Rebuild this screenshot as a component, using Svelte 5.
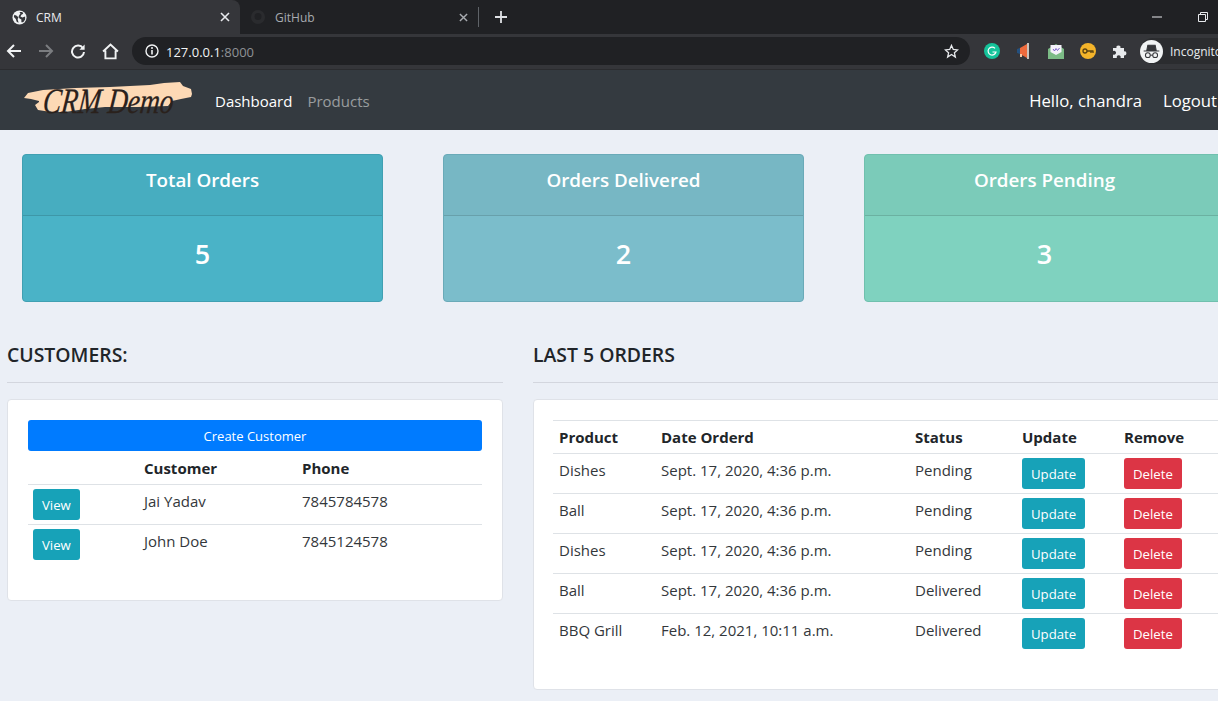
<script>
  const stats = [
    { title: 'Total Orders', value: 5, cls: 'c1' },
    { title: 'Orders Delivered', value: 2, cls: 'c2' },
    { title: 'Orders Pending', value: 3, cls: 'c3' }
  ];
  const customers = [
    { name: 'Jai Yadav', phone: '7845784578' },
    { name: 'John Doe', phone: '7845124578' }
  ];
  const d = 'Sept. 17, 2020, 4:36 p.m.';
  const orders = [
    { p: 'Dishes', d, s: 'Pending' },
    { p: 'Ball', d, s: 'Pending' },
    { p: 'Dishes', d, s: 'Pending' },
    { p: 'Ball', d, s: 'Delivered' },
    { p: 'BBQ Grill', d: 'Feb. 12, 2021, 10:11 a.m.', s: 'Delivered' }
  ];
</script>

<div class="window">
  <div class="tabstrip">
    <div class="tab active">
      <svg class="fav" viewBox="0 0 16 16" width="15" height="15"><circle cx="8" cy="8" r="7.500" fill="#f1f3f4"/><path d="M2.500 5l2.500 1 2 2-1 1.500 1 4-2-1-1-3-2-2zM8 2l3 0 1 2-2 1-1 2 2 1 3-1 0 3-2 3-2 0 0-3-2-1-1-2 1-2 1-1z" fill="#35363a"/></svg>
      <span class="tabtext">CRM</span>
      <svg class="x" viewBox="0 0 10 10" width="10" height="10"><path d="M1 1l8 8M9 1l-8 8" stroke="#e8eaed" stroke-width="1.600"/></svg>
    </div>
    <div class="tab inactive">
      <svg class="fav" viewBox="0 0 16 16" width="16" height="16"><circle cx="8" cy="8" r="7" fill="#2a2b2e"/><circle cx="8" cy="7.500" r="3.500" fill="#202124"/></svg>
      <span class="tabtext dim">GitHub</span>
      <svg class="x" viewBox="0 0 10 10" width="9" height="9"><path d="M1 1l8 8M9 1l-8 8" stroke="#a8abb0" stroke-width="1.600"/></svg>
    </div>
    <span class="tabsep"></span>
    <svg class="plus" viewBox="0 0 14 14" width="14" height="14"><path d="M7 1v12M1 7h12" stroke="#dfe1e5" stroke-width="1.800"/></svg>
    <div class="winctl">
      <svg viewBox="0 0 10 2" width="10" height="2"><path d="M0 1h10" stroke="#e8eaed"/></svg>
      <svg viewBox="0 0 10 10" width="10" height="10"><path d="M.5 2.500h7v7h-7zM2.500 2.500v-2h7v7h-2" fill="none" stroke="#e8eaed"/></svg>
    </div>
  </div>

  <div class="toolbar">
    <div class="navbtn"><svg viewBox="0 0 16 16" width="16" height="16"><path d="M15 8H2M8 2L2 8l6 6" fill="none" stroke="#f1f3f4" stroke-width="2"/></svg></div>
    <div class="navbtn"><svg viewBox="0 0 16 16" width="16" height="16"><path d="M1 8h13M8 2l6 6-6 6" fill="none" stroke="#7b7d80" stroke-width="2"/></svg></div>
    <div class="navbtn"><svg viewBox="0 0 16 16" width="16" height="16"><path d="M13 5.200A6 6 0 1 0 14 9" fill="none" stroke="#f1f3f4" stroke-width="2"/><path d="M14.600 1.500v5.200H9.400z" fill="#f1f3f4"/></svg></div>
    <div class="navbtn"><svg viewBox="0 0 16 16" width="17" height="17"><path d="M1 8l7-6.500L15 8M3.200 7v7.500h9.600V7" fill="none" stroke="#f1f3f4" stroke-width="1.800"/></svg></div>
    <div class="omnibox">
      <svg class="siteinfo" viewBox="0 0 14 14" width="14" height="14"><circle cx="7" cy="7" r="6" fill="none" stroke="#f1f3f4" stroke-width="1.400"/><path d="M7 6v4.500" stroke="#f1f3f4" stroke-width="1.600"/><circle cx="7" cy="3.900" r="1" fill="#f1f3f4"/></svg>
      <span class="url">127.0.0.1<span class="port">:8000</span></span>
      <svg class="star" viewBox="0 0 16 16" width="15" height="15"><path d="M8 1.500l1.900 4.300 4.600.5-3.400 3.100 1 4.600L8 11.200l-4.100 2.800 1-4.600L1.500 6.300l4.600-.5z" fill="none" stroke="#e8eaed" stroke-width="1.400"/></svg>
    </div>
    <div class="exts">
      <svg viewBox="0 0 16 16" width="16" height="16"><circle cx="8" cy="8" r="8" fill="#15c39a"/><path d="M11 5.300A4 4 0 1 0 12 9H8.500" fill="none" stroke="#fff" stroke-width="1.200"/></svg>
      <svg viewBox="0 0 16 16" width="16" height="16"><path d="M1 6l3-1v6l-3-1z" fill="#24507e"/><path d="M4 5l7-4v14l-7-4z" fill="#ee6a3c"/><path d="M12 0v16" stroke="#f1e6dc" stroke-width="1.600"/><path d="M4 11l2 0 0 3H4z" fill="#f3c9a8"/></svg>
      <svg viewBox="0 0 16 16" width="16" height="16"><path d="M0 6l8-5 8 5v10H0z" fill="#7cbb86"/><path d="M2.500 2h11v7l-5.500 3-5.500-3z" fill="#f4f1fa"/><path d="M5 6l1.500 2L8 5.500 9.500 7.500 11.500 5" fill="none" stroke="#7b5fc9" stroke-width="1"/></svg>
      <svg viewBox="0 0 16 16" width="16" height="16"><circle cx="8" cy="8" r="8" fill="#f4b42a"/><circle cx="5" cy="8" r="2" fill="none" stroke="#5b4310" stroke-width="1.300"/><path d="M7 8h6.500M11 8v2M13 8v2" stroke="#5b4310" stroke-width="1.300"/></svg>
      <svg viewBox="0 0 16 16" width="16" height="16"><path d="M1 5h3.500a2 2 0 1 1 3.900 0H12v3.400a2 2 0 1 1 0 3.900V15H8.500a2 2 0 1 0-3.600 0H1v-3.500a2 2 0 1 0 0-3.400z" fill="#e8eaed"/></svg>
    </div>
    <div class="profile">
      <svg viewBox="0 0 22 22" width="23" height="23"><circle cx="11" cy="11" r="11" fill="#f1f3f4"/><path d="M3.500 10.500h15M6.500 10l1-5h7l1 5z" fill="#35363a" stroke="#35363a"/><circle cx="7.500" cy="14.500" r="2.300" fill="none" stroke="#35363a"/><circle cx="14.500" cy="14.500" r="2.300" fill="none" stroke="#35363a"/><path d="M9.800 14.500h2.400" stroke="#35363a"/></svg>
      <span>Incognito</span>
    </div>
  </div>

  <nav class="navbar">
    <svg class="logo" viewBox="0 -8 170 56" width="170" height="56">
      <path d="M1 18l4-5 15-3 32-2 35-1 40-2 14-2 16-1 3 4 8 3 1 5-1 3-10 2-9 2-4 5-30 1-33 0-20 2-20 3-14 0-13-2-3-5 4-3 0-1-8-2z" fill="#fdd9b5"/>
      <text class="logotext" transform="translate(19,33) skewX(-6) scale(1,1.3)">CRM Demo</text>
    </svg>
    <a class="link on" href="#d">Dashboard</a>
    <a class="link off" href="#p">Products</a>
    <div class="navright">
      <span>Hello, chandra</span>
      <span>Logout</span>
    </div>
  </nav>

  <main class="page">
    <section class="stats">
      {#each stats as s}
        <div class="stat {s.cls}">
          <div class="stathead">{s.title}</div>
          <div class="statbody">{s.value}</div>
        </div>
      {/each}
    </section>

    <section class="cols">
      <div class="colleft">
        <h2>CUSTOMERS:</h2>
        <hr />
        <div class="panel custpanel">
          <button class="createbtn">Create Customer</button>
          <table class="cust">
            <thead><tr><th class="cv"></th><th class="cn">Customer</th><th>Phone</th></tr></thead>
            <tbody>
              {#each customers as c}
                <tr><td class="tight"><button class="btn teal">View</button></td><td>{c.name}</td><td>{c.phone}</td></tr>
              {/each}
            </tbody>
          </table>
        </div>
      </div>
      <div class="colright">
        <h2>LAST 5 ORDERS</h2>
        <hr />
        <div class="panel orderpanel">
          <table class="ord">
            <thead><tr><th class="o1">Product</th><th class="o2">Date Orderd</th><th class="o3">Status</th><th class="o4">Update</th><th class="o5">Remove</th></tr></thead>
            <tbody>
              {#each orders as o}
                <tr><td>{o.p}</td><td>{o.d}</td><td>{o.s}</td><td><button class="btn teal">Update</button></td><td><button class="btn red">Delete</button></td></tr>
              {/each}
            </tbody>
          </table>
        </div>
      </div>
    </section>
  </main>
</div>

<style>
  :global(body) { margin: 0; background: #ebeff6; }
  .window { width: 1218px; height: 701px; overflow: hidden; font-family: "Open Sans", "Noto Sans", sans-serif; color: #212529; background: #ebeff6; }

  .tabstrip { height: 34px; background: #202124; display: flex; align-items: center; }
  .tab { width: 240px; height: 34px; display: flex; align-items: center; box-sizing: border-box; flex: none; }
  .tab.active { background: #35363a; border-radius: 0 8px 0 0; padding: 0 10px 0 12px; }
  .tab.inactive { padding: 0 10px 0 10px; width: 238px; }
  .fav { flex: none; }
  .tabtext { margin-left: 9px; font-size: 12px; color: #e8eaed; flex: 1; }
  .tabtext.dim { color: #a8abb0; }
  .tabsep { width: 1px; height: 20px; background: #5f6368; flex: none; }
  .plus { margin-left: 15px; flex: none; }
  .winctl { margin-left: auto; display: flex; gap: 36px; align-items: center; padding-right: 10px; }

  .toolbar { height: 36px; background: #35363a; display: flex; align-items: center; box-sizing: border-box; padding: 0 0 1px 0; border-bottom: 1px solid #2b2c2f; }
  .navbtn { width: 32px; display: flex; justify-content: center; flex: none; margin-left: -2px; margin-right: 2px; }
  .omnibox { width: 838px; height: 28px; margin-left: 4px; background: #202124; border-radius: 14px; display: flex; align-items: center; box-sizing: border-box; padding: 0 11px 0 13px; flex: none; }
  .url { margin-left: 7px; font-size: 13px; color: #f1f3f4; padding-top: 1px; }
  .port { color: #8f9296; }
  .star { margin-left: auto; }
  .exts { display: flex; gap: 16px; margin-left: 14px; flex: none; align-items: center; }
  .profile { margin-left: 12px; padding-left: 0; height: 26px; display: flex; align-items: center; gap: 7px; background: #2b2c2f; border-radius: 13px 0 0 13px; flex: none; color: #e8eaed; font-size: 12px; width: 90px; }

  .navbar { height: 60px; background: #343a40; display: flex; align-items: center; padding-left: 23px; box-sizing: border-box; }
  .logo { flex: none; margin-right: 22px; }
  .logotext { font-family: "Liberation Serif", serif; font-style: italic; font-size: 27.500px; fill: #2a211c; stroke: #2a211c; stroke-width: .2px; }
  .link { font-size: 15px; text-decoration: none; margin-right: 15px; padding-top: 1px; }
  .link.on { color: #fff; }
  .link.off { color: rgba(255,255,255,.5); }
  .navright { margin-left: auto; display: flex; gap: 21px; font-size: 16.700px; color: #fff; flex: none; margin-right: 1px; }

  .page { width: 1260px; }
  .stats { display: flex; gap: 60px; padding: 24px 0 0 22px; }
  .stat { width: 361px; height: 148px; flex: none; box-sizing: border-box; border: 1px solid; border-radius: 4px; color: #fff; text-align: center; overflow: hidden; display: flex; flex-direction: column; }
  .stathead { height: 60px; border-bottom: 1px solid rgba(0,0,0,.125); background: rgba(0,0,0,.03); font-size: 18.800px; font-weight: 600; line-height: 50px; }
  .statbody { flex: 1; font-size: 27px; font-weight: 600; line-height: 76px; }
  .c1 { background: #4ab3c7; border-color: #40a0b2; }
  .c2 { background: #7bbdcb; border-color: #6aaab8; }
  .c3 { background: #7fd2bf; border-color: #70c0ae; }

  .cols { display: flex; gap: 30px; padding: 40px 0 0 7px; }
  .colleft { width: 496px; flex: none; }
  .colright { flex: 1; }
  h2 { margin: 0; font-size: 19.400px; font-weight: 600; line-height: 26px; height: 25px; }
  hr { margin: 15px 0 16px; border: 0; border-top: 1px solid #d3d6de; }
  .panel { background: #fff; border: 1px solid #dfe2e8; border-radius: 4px; box-sizing: border-box; padding: 20px; }
  .custpanel { height: 202px; }
  .orderpanel { height: 291px; }

  table { border-collapse: collapse; table-layout: fixed; font-size: 15px; line-height: 24px; width: 100%; }
  th { text-align: left; font-weight: 700; padding: 4px 6px; }
  td { vertical-align: top; padding: 4px 6px 0; height: 40px; box-sizing: border-box; color: #33373b; }
  tbody tr { border-top: 1px solid #dee2e6; }
  .createbtn { display: block; width: 100%; height: 31px; background: #007bff; border: 0; border-radius: 3px; color: #fff; font: 13px "Open Sans", sans-serif; }
  .cust thead th { padding: 5px 6px 4px; }
  .cv { width: 98px; }
  .cn { width: 146px; }
  .tight { padding-left: 5px; }
  .btn { height: 31px; border: 0; border-radius: 3px; color: #fff; font: 13.200px "Open Sans", sans-serif; padding: 0 9px; display: block; }
  .teal { background: #17a2b8; }
  .red { background: #dc3545; }
  .ord { width: 680px; margin-left: -1px; }
  .ord thead tr { border-top: 1px solid #dee2e6; }
  .ord thead th { padding: 4px 6px; height: 33px; box-sizing: border-box; }
  .o1 { width: 102px; }
  .o2 { width: 254px; }
  .o3 { width: 107px; }
  .o4 { width: 102px; }
  .o5 { width: 115px; }
</style>
